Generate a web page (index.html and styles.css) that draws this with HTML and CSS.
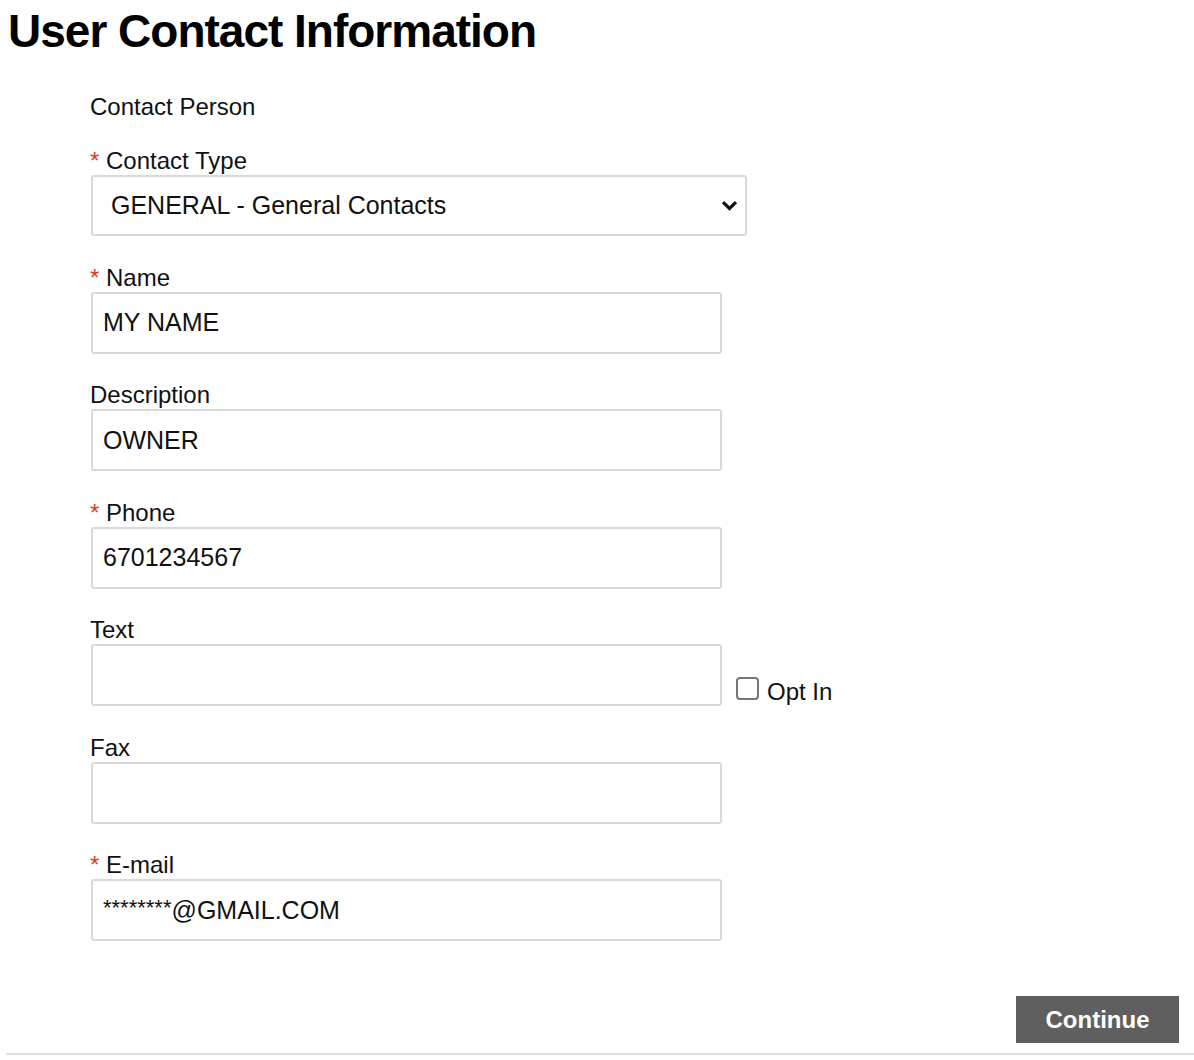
FILE: index.html
```html
<!DOCTYPE html>
<html lang="en">
<head>
<meta charset="utf-8">
<title>User Contact Information</title>
<link rel="stylesheet" href="styles.css">
</head>
<body>
<div class="page">
  <h1 class="title">User Contact Information</h1>
  <form class="form">
    <div class="section">Contact Person</div>
    <div class="fields">
      <div class="field">
        <label class="label"><span class="req">*</span> Contact Type</label>
        <div class="select">
          <span>GENERAL - General Contacts</span>
          <svg class="chev" width="17" height="11" viewBox="0 0 17 11"><path d="M2 2.2 L8.5 8.5 L15 2.2" fill="none" stroke="#111" stroke-width="3.2" stroke-linejoin="miter"/></svg>
        </div>
      </div>
      <div class="field">
        <label class="label"><span class="req">*</span> Name</label>
        <div class="input">MY NAME</div>
      </div>
      <div class="field">
        <label class="label">Description</label>
        <div class="input">OWNER</div>
      </div>
      <div class="field">
        <label class="label"><span class="req">*</span> Phone</label>
        <div class="input">6701234567</div>
      </div>
      <div class="field">
        <label class="label">Text</label>
        <div class="row">
          <div class="input"></div>
          <div class="opt"><span class="box"></span><span>Opt In</span></div>
        </div>
      </div>
      <div class="field">
        <label class="label">Fax</label>
        <div class="input"></div>
      </div>
      <div class="field">
        <label class="label"><span class="req">*</span> E-mail</label>
        <div class="input"><span class="stars">********</span>@GMAIL.COM</div>
      </div>
    </div>
  </form>
  <div class="actions">
    <button class="btn" type="button">Continue</button>
  </div>
  <div class="rule"></div>
</div>
</body>
</html>
```
FILE: styles.css
```css
* { box-sizing: border-box; }
html, body { margin: 0; padding: 0; background: #fff; }
body {
  font-family: "Liberation Sans", Arial, Helvetica, sans-serif;
  color: #111;
}
.page { width: 1194px; }
.title {
  margin: 5px 0 0 8px;
  font-size: 46px;
  line-height: 53px;
  font-weight: 700;
  letter-spacing: -1px;
  color: #000;
}
.form { padding-left: 90px; margin-top: 35px; }
.section { font-size: 24px; line-height: 28px; }
.fields { display: flex; flex-direction: column; gap: 27.5px; margin-top: 26px; }
.field { display: flex; flex-direction: column; }
.label { font-size: 24px; line-height: 28px; }
.req { color: #d2401f; }
.select {
  margin-left: 1px;
  width: 656px;
  height: 61px;
  border: 2px solid #d9d9d9;
  border-radius: 3px;
  display: flex;
  align-items: center;
  justify-content: space-between;
  padding: 0 7px 0 18px;
  font-size: 25px;
}
.chev { display: block; }
.input {
  margin-left: 1px;
  width: 631px;
  height: 62px;
  border: 2px solid #d9d9d9;
  border-radius: 3px;
  display: flex;
  align-items: center;
  padding: 0 10px;
  font-size: 25px;
  flex: none;
}
.stars { font-size: 22px; position: relative; top: -2px; }
.row { display: flex; align-items: flex-end; gap: 14px; }
.opt { display: flex; align-items: flex-start; gap: 8px; font-size: 24px; line-height: 28px; }
.box {
  width: 23px; height: 23px;
  border: 2px solid #767676;
  border-radius: 4px;
  margin-top: -1px;
  display: block;
}
.actions { display: flex; justify-content: flex-end; padding-right: 15px; margin-top: 55px; }
.btn {
  width: 163px;
  height: 47px;
  background: #5f5f5f;
  color: #fff;
  border: 0;
  font-family: "Liberation Sans", Arial, sans-serif;
  font-weight: 700;
  font-size: 24px;
  padding: 0;
}
.rule { margin: 10px 0 0 6px; height: 2px; background: #dedede; }
```
